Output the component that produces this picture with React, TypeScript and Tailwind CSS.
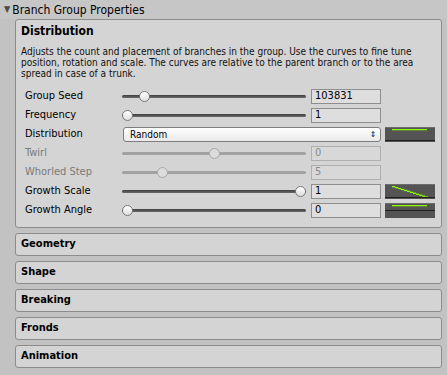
import React from 'react';

type Row = {
  label: string;
  kind: 'slider' | 'select';
  pos?: number;
  value?: string;
  disabled?: boolean;
  curve?: 'flat' | 'down' | 'mid';
};

const rows: Row[] = [
  { label: 'Group Seed', kind: 'slider', pos: 0.1, value: '103831' },
  { label: 'Frequency', kind: 'slider', pos: 0, value: '1' },
  { label: 'Distribution', kind: 'select', value: 'Random', curve: 'flat' },
  { label: 'Twirl', kind: 'slider', pos: 0.5, value: '0', disabled: true },
  { label: 'Whorled Step', kind: 'slider', pos: 0.2, value: '5', disabled: true },
  { label: 'Growth Scale', kind: 'slider', pos: 1, value: '1', curve: 'down' },
  { label: 'Growth Angle', kind: 'slider', pos: 0, value: '0', curve: 'mid' },
];

const sections = ['Geometry', 'Shape', 'Breaking', 'Fronds', 'Animation'];

function Slider({ pos, disabled }: { pos: number; disabled?: boolean }) {
  return (
    <div className="relative w-[184px] h-[15px] flex items-center">
      <div
        className={`h-[3px] w-full rounded-full ${disabled ? 'bg-[#a2a2a2]' : 'bg-[linear-gradient(#3f3f3f,#6a6a6a)]'}`}
      />
      <div
        className={`absolute top-[2px] h-[11px] w-[11px] rounded-full border ${
          disabled ? 'border-[#a8a8a8] bg-[#dcdcdc]' : 'border-[#7a7a7a] bg-[linear-gradient(#ffffff,#dedede)]'
        }`}
        style={{ left: `calc(${pos * 100}% - ${pos * 11}px)` }}
      />
    </div>
  );
}

function Curve({ type }: { type: 'flat' | 'down' | 'mid' }) {
  const steps = [] as React.ReactNode[];
  if (type === 'down') {
    for (let i = 0; i < 12; i++) {
      steps.push(<rect key={i} x={7 + i * 3} y={2 + i * 0.95} width={3.2} height={1.3} fill="#8aff00" />);
    }
  }
  return (
    <svg width="50" height="15" viewBox="0 0 50 15" className="block">
      <rect width="50" height="15" fill="#545454" />
      <rect width="50" height="1" fill="#6c6c6c" />
      {type !== 'down' && <rect x="7" y="2" width="35" height="1.3" fill="#8aff00" />}
      {steps}
      {type === 'mid' ? (
        <rect y="7" width="50" height="1" fill="#1e1e1e" />
      ) : (
        <rect y="13" width="50" height="1" fill="#1e1e1e" />
      )}
    </svg>
  );
}

export default function App() {
  return (
    <div className="w-[447px] h-[375px] bg-[#c2c2c2] overflow-hidden text-black font-['DejaVu_Sans_Condensed','DejaVu_Sans',sans-serif]">
      <div className="h-[19px] flex items-center pl-[4px] gap-[2px] text-[12px] bg-[#c6c6c6]">
        <span className="text-[9px] text-[#4a4a4a] leading-none">▼</span>
        <span>Branch Group Properties</span>
      </div>

      <div className="ml-[15px] mr-[5px] flex flex-col gap-[5px]">
        <div className="border border-[#8c8c8c] rounded-[3px] bg-[#d4d4d4] pl-[5px] pr-[6px] pb-[7px]">
          <div className="h-[22px] flex items-center font-bold text-[12px] leading-none">Distribution</div>
          <div className="mt-[4px] text-[10px] leading-[11px] text-[#111] whitespace-nowrap">
            <div>Adjusts the count and placement of branches in the group. Use the curves to fine tune</div>
            <div>position, rotation and scale. The curves are relative to the parent branch or to the area</div>
            <div>spread in case of a trunk.</div>
          </div>
          <div className="mt-[8px] flex flex-col">
            {rows.map((r) => (
              <div key={r.label} className="h-[19px] flex items-center pl-[4px]">
                <div className={`w-[97px] text-[11px] whitespace-nowrap ${r.disabled ? 'text-[#7a7a7a]' : ''}`}>{r.label}</div>
                {r.kind === 'select' ? (
                  <div className="ml-[1px] w-[258px] h-[15px] rounded-[3px] border border-[#7e7e7e] bg-[linear-gradient(#ffffff,#e9e9e9)] flex items-center justify-between pl-[6px] pr-[4px] text-[10px]">
                    <span>Random</span>
                    <span className="text-[8px] leading-none">⇕</span>
                  </div>
                ) : (
                  <>
                    <Slider pos={r.pos ?? 0} disabled={r.disabled} />
                    <div
                      className={`ml-[5px] w-[70px] h-[15px] border flex items-center pl-[3px] text-[11px] ${
                        r.disabled
                          ? 'border-[#b0b0b0] bg-[#d8d8d8] text-[#8a8a8a]'
                          : 'border-[#8e8e8e] bg-[#dedede]'
                      }`}
                    >
                      {r.value}
                    </div>
                  </>
                )}
                <div className="ml-[4px] w-[50px]">{r.curve && <Curve type={r.curve} />}</div>
              </div>
            ))}
          </div>
        </div>

        {sections.map((s) => (
          <div
            key={s}
            className="h-[23px] border border-[#8c8c8c] rounded-[3px] bg-[#d4d4d4] flex items-center pl-[5px] font-bold text-[11px]"
          >
            {s}
          </div>
        ))}
      </div>
    </div>
  );
}
